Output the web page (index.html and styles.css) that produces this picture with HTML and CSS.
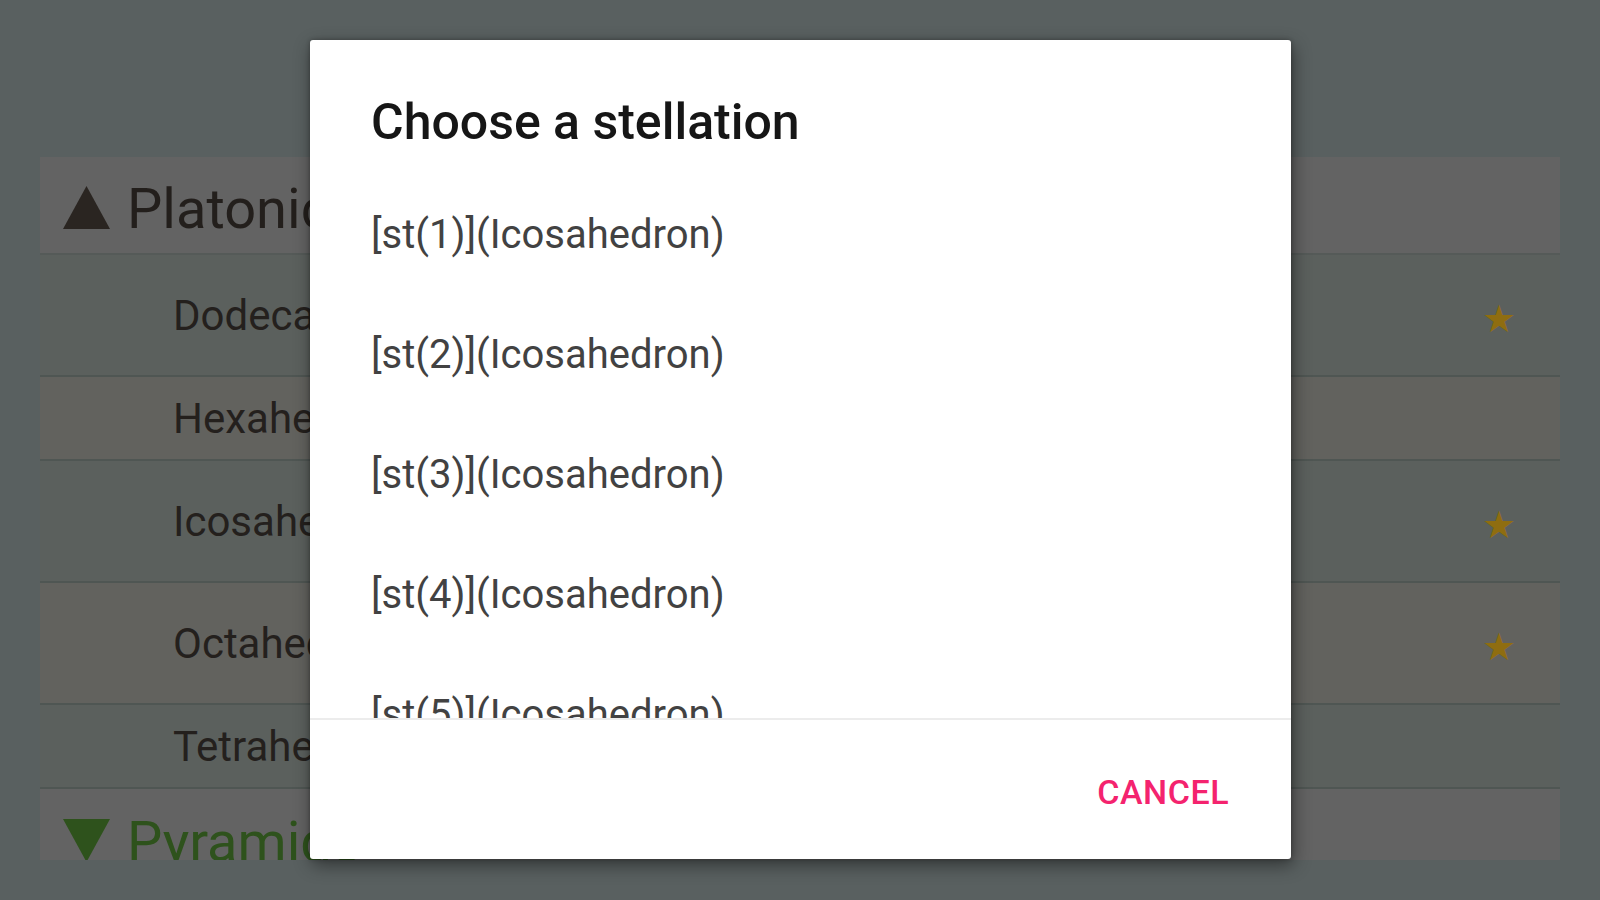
FILE: index.html
```html
<!DOCTYPE html>
<html>
<head>
<meta charset="utf-8">
<link rel="stylesheet" href="styles.css">
</head>
<body>
<div class="page">
  <div class="list">
    <div class="group-header">
      <svg class="tri" width="47" height="43" viewBox="0 0 47 43"><polygon points="23.5,0 47,43 0,43" fill="#2a2521"/></svg>
      <span class="group-title">Platonic</span>
    </div>
    <div class="row tall odd"><span class="name">Dodecahedron</span><span class="star">★</span></div>
    <div class="row short even"><span class="name">Hexahedron</span></div>
    <div class="row tall odd"><span class="name">Icosahedron</span><span class="star">★</span></div>
    <div class="row tall even"><span class="name">Octahedron</span><span class="star">★</span></div>
    <div class="row short odd"><span class="name">Tetrahedron</span></div>
    <div class="group-header green">
      <svg class="tri" width="47" height="43" viewBox="0 0 47 43"><polygon points="0,0 47,0 23.5,43" fill="#2e521c"/></svg>
      <span class="group-title">Pyramids</span>
    </div>
  </div>
</div>
<div class="dialog">
  <div class="dialog-title">Choose a stellation</div>
  <div class="dialog-items">
    <div class="item">[st(1)](Icosahedron)</div>
    <div class="item">[st(2)](Icosahedron)</div>
    <div class="item">[st(3)](Icosahedron)</div>
    <div class="item">[st(4)](Icosahedron)</div>
    <div class="item">[st(5)](Icosahedron)</div>
  </div>
  <div class="dialog-actions">
    <span class="btn">CANCEL</span>
  </div>
</div>
</body>
</html>
```
FILE: styles.css
```css
html, body {
  margin: 0;
  padding: 0;
  width: 1600px;
  height: 900px;
  overflow: hidden;
  background: #596060;
  font-family: Roboto, "Noto Sans", sans-serif;
}
.page {
  padding: 157px 40px 0 40px;
}
.list {
  height: 703px;
  overflow: hidden;
  display: flex;
  flex-direction: column;
}
.group-header {
  flex: none;
  height: 98px;
  box-sizing: border-box;
  padding-top: 29px;
  background: #636363;
  border-bottom: 2px solid #555a58;
  display: flex;
  align-items: flex-start;
  padding-left: 23px;
  gap: 17px;
  color: #231f1c;
}
.group-header.green {
  color: #2e521c;
  padding-top: 30px;
  height: 100px;
  border-bottom: none;
}
.group-title {
  font-size: 56px;
  line-height: 46px;
}
.tri { flex: none; }
.row {
  flex: none;
  display: flex;
  align-items: center;
  justify-content: space-between;
  padding-left: 133px;
  padding-right: 44px;
  border-bottom: 2px solid #4f5653;
  color: #24201d;
}
.row.tall { height: 120px; }
.row.short { height: 82px; }
.row.odd { background: #5b605d; }
.row.even { background: #62625e; }
.name {
  font-size: 42px;
}
.star {
  color: #8f6d10;
  font-family: "DejaVu Sans", sans-serif;
  font-size: 38px;
  line-height: 38px;
  margin-top: 8px;
}
.dialog {
  position: absolute;
  left: 310px;
  top: 40px;
  width: 981px;
  height: 819px;
  background: #ffffff;
  border-radius: 3px;
  box-shadow: 2px 6px 18px rgba(0,0,0,0.45), 0 0 4px rgba(0,0,0,0.3);
  display: flex;
  flex-direction: column;
  overflow: hidden;
}
.dialog-title {
  flex: none;
  padding: 57px 62px 28px 61px;
  font-size: 50px;
  line-height: 50px;
  font-weight: 500;
  color: #161616;
}
.dialog-items {
  flex: none;
  height: 543px;
  overflow: hidden;
  border-bottom: 2px solid #ececec;
}
.item {
  height: 120px;
  line-height: 120px;
  padding-left: 61px;
  font-size: 40px;
  color: #424242;
}
.dialog-actions {
  flex: 1;
  display: flex;
  align-items: center;
  justify-content: flex-end;
  padding-right: 62px;
  padding-top: 4px;
}
.btn {
  font-size: 34px;
  font-weight: 500;
  color: #f4236e;
  letter-spacing: 0.5px;
}
```
